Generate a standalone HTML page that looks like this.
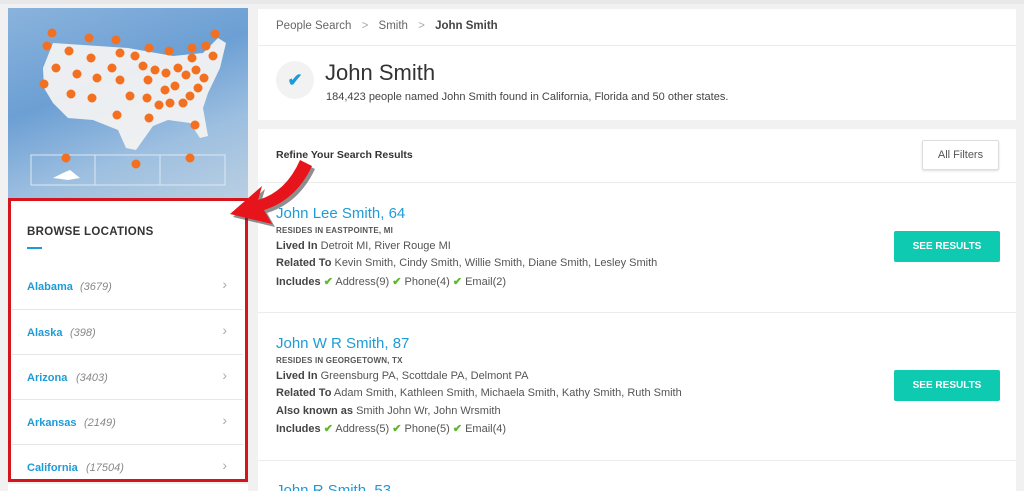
<!DOCTYPE html>
<html><head><meta charset="utf-8"><style>
*{margin:0;padding:0;box-sizing:border-box}
html,body{width:1024px;height:491px;overflow:hidden}
body{background:#f1f1f1;font-family:"Liberation Sans",sans-serif;position:relative;color:#333}
.card{position:absolute;background:#fff}
.loc{position:absolute;left:12px;width:231px;height:45px;border-top:1px solid #e6e6e6;font-size:11px}
.loc b{position:absolute;left:15px;top:17px;color:#1e9bd7}
.loc i{position:absolute;top:17px;color:#888}
.loc span{position:absolute;right:16px;top:12px;color:#aaa;font-size:14px}
.wrap{position:absolute;left:256px;top:0;width:760px;height:491px}
.wrap div{white-space:nowrap}
.nm{position:absolute;left:20px;color:#1e9bd7;font-size:15px}
.sm{position:absolute;left:20px;font-size:8px;font-weight:bold;color:#555;letter-spacing:.2px}
.ln{position:absolute;left:20px;font-size:11px;color:#555}
.ln b{color:#444}
.ck{color:#5cb82a;font-weight:bold}
.btn{position:absolute;left:638px;width:106px;height:31px;background:#0ecab0;color:#fff;font-size:10px;font-weight:bold;text-align:center;line-height:31px;border-radius:2px}
</style></head><body>
<div style="position:absolute;left:0;top:0;width:1024px;height:4px;background:#e8e8e8"></div>
<div class="card" style="left:8px;top:8px;width:240px;height:190px;background:linear-gradient(160deg,#8ab3dc,#6c9fd4 40%,#9dbfe0 70%,#b9cfe2);overflow:hidden">
<svg width="240" height="190" style="position:absolute;left:0;top:0">
<path d="M45 35 L120 40 L165 48 L195 45 L210 30 L218 35 L212 60 L200 85 L195 100 L200 128 L192 130 L182 115 L160 112 L145 118 L128 142 L118 140 L110 122 L85 112 L60 110 L45 95 L36 80 L35 60 Z" fill="#f2f2f2" opacity=".95"/>
<rect x="23" y="147" width="194" height="30" fill="none" stroke="#dde8f2" stroke-width="1"/>
<line x1="87" y1="147" x2="87" y2="177" stroke="#dde8f2"/><line x1="152" y1="147" x2="152" y2="177" stroke="#dde8f2"/>
<path d="M45 170 L55 165 L62 162 L72 170 L60 172Z" fill="#fff"/>
<g fill="#f37021">
<circle cx="44" cy="25" r="4.5"/><circle cx="39" cy="38" r="4.5"/><circle cx="81" cy="30" r="4.5"/><circle cx="108" cy="32" r="4.5"/><circle cx="61" cy="43" r="4.5"/><circle cx="83" cy="50" r="4.5"/><circle cx="112" cy="45" r="4.5"/><circle cx="127" cy="48" r="4.5"/><circle cx="141" cy="40" r="4.5"/><circle cx="161" cy="43" r="4.5"/><circle cx="207" cy="26" r="4.5"/><circle cx="184" cy="40" r="4.5"/><circle cx="198" cy="38" r="4.5"/><circle cx="205" cy="48" r="4.5"/><circle cx="184" cy="50" r="4.5"/><circle cx="48" cy="60" r="4.5"/><circle cx="69" cy="66" r="4.5"/><circle cx="89" cy="70" r="4.5"/><circle cx="104" cy="60" r="4.5"/><circle cx="112" cy="72" r="4.5"/><circle cx="135" cy="58" r="4.5"/><circle cx="140" cy="72" r="4.5"/><circle cx="147" cy="62" r="4.5"/><circle cx="158" cy="65" r="4.5"/><circle cx="170" cy="60" r="4.5"/><circle cx="178" cy="67" r="4.5"/><circle cx="188" cy="62" r="4.5"/><circle cx="196" cy="70" r="4.5"/><circle cx="36" cy="76" r="4.5"/><circle cx="63" cy="86" r="4.5"/><circle cx="84" cy="90" r="4.5"/><circle cx="122" cy="88" r="4.5"/><circle cx="139" cy="90" r="4.5"/><circle cx="157" cy="82" r="4.5"/><circle cx="167" cy="78" r="4.5"/><circle cx="190" cy="80" r="4.5"/><circle cx="151" cy="97" r="4.5"/><circle cx="162" cy="95" r="4.5"/><circle cx="175" cy="95" r="4.5"/><circle cx="182" cy="88" r="4.5"/><circle cx="109" cy="107" r="4.5"/><circle cx="141" cy="110" r="4.5"/><circle cx="187" cy="117" r="4.5"/><circle cx="58" cy="150" r="4.5"/><circle cx="128" cy="156" r="4.5"/><circle cx="182" cy="150" r="4.5"/>
</g></svg></div>
<div class="card" style="left:8px;top:198px;width:240px;height:284px;border:3px solid #d6141b"></div>
<div style="position:absolute;left:27px;top:226px;font-size:11.5px;font-weight:bold;color:#333;letter-spacing:.3px">BROWSE LOCATIONS</div>
<div style="position:absolute;left:27px;top:247px;width:15px;height:2px;background:#1e9bd7"></div>
<div class="loc" style="top:264px;border:none"><b>Alabama</b><i style="left:68px">(3679)</i><span>›</span></div>
<div class="loc" style="top:309px"><b>Alaska</b><i style="left:58px">(398)</i><span>›</span></div>
<div class="loc" style="top:354px"><b>Arizona</b><i style="left:64px">(3403)</i><span>›</span></div>
<div class="loc" style="top:399px"><b>Arkansas</b><i style="left:72px">(2149)</i><span>›</span></div>
<div class="loc" style="top:444px;height:33px"><b>California</b><i style="left:74px">(17504)</i><span>›</span></div>
<div class="card" style="left:8px;top:484px;width:240px;height:10px"></div>
<div class="card" style="left:258px;top:9px;width:758px;height:111px"></div>
<div style="position:absolute;left:258px;top:45px;width:758px;height:1px;background:#ececec"></div>
<div style="position:absolute;left:276px;top:20px;font-size:11.5px;color:#666;white-space:nowrap">People Search <span style="color:#aaa;margin:0 7px">&gt;</span> Smith <span style="color:#aaa;margin:0 7px">&gt;</span> <b style="color:#444">John Smith</b></div>
<div style="position:absolute;left:276px;top:61px;width:38px;height:38px;border-radius:50%;background:#f2f2f2;color:#1e9bd7;font-size:18px;font-weight:bold;text-align:center;line-height:38px">✔</div>
<div style="position:absolute;left:325px;top:60px;font-size:22px;color:#333">John Smith</div>
<div style="position:absolute;left:326px;top:91px;font-size:11px;color:#444;white-space:nowrap">184,423 people named John Smith found in California, Florida and 50 other states.</div>
<div class="card" style="left:258px;top:129px;width:758px;height:370px"></div>
<div style="position:absolute;left:276px;top:149px;font-size:10.5px;color:#333;font-weight:bold">Refine Your Search Results</div>
<div style="position:absolute;left:922px;top:140px;width:77px;height:30px;border:1px solid #ddd;border-radius:2px;box-shadow:0 1px 2px #ddd;font-size:11px;color:#555;text-align:center;line-height:28px;background:#fff">All Filters</div>
<div style="position:absolute;left:258px;top:182px;width:758px;height:1px;background:#ececec"></div>
<div style="position:absolute;left:258px;top:312px;width:758px;height:1px;background:#ececec"></div>
<div style="position:absolute;left:258px;top:460px;width:758px;height:1px;background:#ececec"></div>
<div class="wrap">
<div class="nm" style="top:205px">John Lee Smith, 64</div>
<div class="sm" style="top:226px">RESIDES IN EASTPOINTE, MI</div>
<div class="ln" style="top:240px"><b>Lived In</b> Detroit MI, River Rouge MI</div>
<div class="ln" style="top:257px"><b>Related To</b> Kevin Smith, Cindy Smith, Willie Smith, Diane Smith, Lesley Smith</div>
<div class="ln" style="top:275px"><b>Includes</b> <span class="ck">✔</span> Address(9) <span class="ck">✔</span> Phone(4) <span class="ck">✔</span> Email(2)</div>
<div class="btn" style="top:231px">SEE RESULTS</div>
<div class="nm" style="top:335px">John W R Smith, 87</div>
<div class="sm" style="top:356px">RESIDES IN GEORGETOWN, TX</div>
<div class="ln" style="top:370px"><b>Lived In</b> Greensburg PA, Scottdale PA, Delmont PA</div>
<div class="ln" style="top:387px"><b>Related To</b> Adam Smith, Kathleen Smith, Michaela Smith, Kathy Smith, Ruth Smith</div>
<div class="ln" style="top:405px"><b>Also known as</b> Smith John Wr, John Wrsmith</div>
<div class="ln" style="top:422px"><b>Includes</b> <span class="ck">✔</span> Address(5) <span class="ck">✔</span> Phone(5) <span class="ck">✔</span> Email(4)</div>
<div class="btn" style="top:370px">SEE RESULTS</div>
<div class="nm" style="top:482px">John R Smith, 53</div>
</div>
<svg width="1024" height="491" style="position:absolute;left:0;top:0">
<path d="M300 160 Q286 192 258 200 L262 186 L230 214 L272 224 L264 210 Q296 200 312 166 Z" fill="#333" opacity=".55" transform="translate(3,3)"/>
<path d="M300 160 Q286 192 258 200 L262 186 L230 214 L272 224 L264 210 Q296 200 312 166 Z" fill="#e8141b"/>
</svg>
</body></html>
